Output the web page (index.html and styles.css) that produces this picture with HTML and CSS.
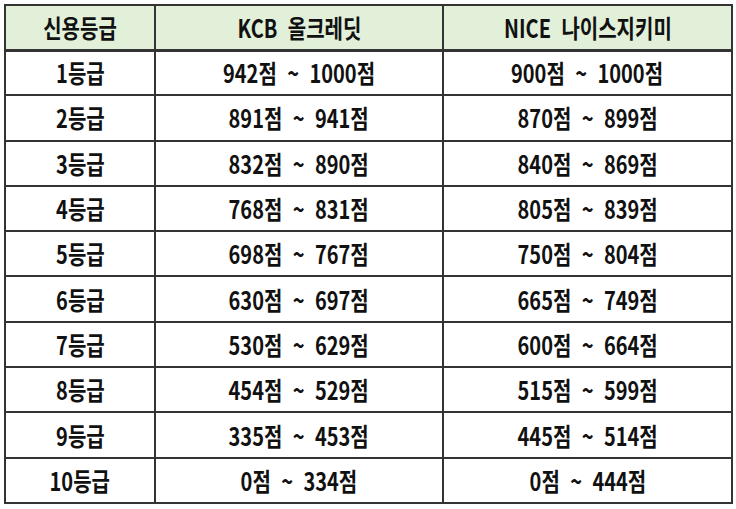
FILE: index.html
```html
<!DOCTYPE html>
<html lang="ko">
<head>
<meta charset="utf-8">
<link rel="stylesheet" href="styles.css">
</head>
<body>
<table class="grade-table">
  <colgroup>
    <col class="c1"><col class="c2"><col class="c3">
  </colgroup>
  <thead>
    <tr><th><span class="t">신용등급</span></th><th><span class="t">KCB 올크레딧</span></th><th><span class="t">NICE 나이스지키미</span></th></tr>
  </thead>
  <tbody>
    <tr><td><span class="t">1등급</span></td><td><span class="t">942점 ~ 1000점</span></td><td><span class="t">900점 ~ 1000점</span></td></tr>
    <tr><td><span class="t">2등급</span></td><td><span class="t">891점 ~ 941점</span></td><td><span class="t">870점 ~ 899점</span></td></tr>
    <tr><td><span class="t">3등급</span></td><td><span class="t">832점 ~ 890점</span></td><td><span class="t">840점 ~ 869점</span></td></tr>
    <tr><td><span class="t">4등급</span></td><td><span class="t">768점 ~ 831점</span></td><td><span class="t">805점 ~ 839점</span></td></tr>
    <tr><td><span class="t">5등급</span></td><td><span class="t">698점 ~ 767점</span></td><td><span class="t">750점 ~ 804점</span></td></tr>
    <tr><td><span class="t">6등급</span></td><td><span class="t">630점 ~ 697점</span></td><td><span class="t">665점 ~ 749점</span></td></tr>
    <tr><td><span class="t">7등급</span></td><td><span class="t">530점 ~ 629점</span></td><td><span class="t">600점 ~ 664점</span></td></tr>
    <tr><td><span class="t">8등급</span></td><td><span class="t">454점 ~ 529점</span></td><td><span class="t">515점 ~ 599점</span></td></tr>
    <tr><td><span class="t">9등급</span></td><td><span class="t">335점 ~ 453점</span></td><td><span class="t">445점 ~ 514점</span></td></tr>
    <tr><td><span class="t">10등급</span></td><td><span class="t">0점 ~ 334점</span></td><td><span class="t">0점 ~ 444점</span></td></tr>
  </tbody>
</table>
</body>
</html>
```
FILE: styles.css
```css
html, body {
  margin: 0;
  padding: 0;
  background: #ffffff;
}
body {
  padding: 4px 0 0 4px;
  font-family: "Noto Sans CJK KR", "Noto Sans", sans-serif;
  color: #111111;
}
.grade-table {
  border-collapse: collapse;
  width: 727px;
  table-layout: fixed;
  border: 2px solid #333333;
}
.c1 { width: 150px; }
.c2 { width: 288px; }
.c3 { width: 289px; }
.grade-table th,
.grade-table td {
  border: 2px solid #333333;
  text-align: center;
  vertical-align: middle;
  padding: 0;
  font-weight: 700;
  font-size: 25px;
  line-height: 1;
}
.grade-table thead tr { height: 45px; }
.grade-table thead th {
  background: #e2efd9;
  border-bottom-width: 3px;
}
.grade-table tbody tr { height: 45.3px; }
.t {
  display: inline-block;
  transform: scaleX(0.8);
  word-spacing: 6px;
  white-space: nowrap;
}
```
